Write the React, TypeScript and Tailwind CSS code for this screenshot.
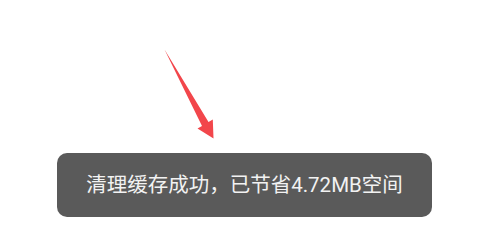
import React from "react";

export default function App() {
  return (
    <div className="relative w-[480px] h-[233px] bg-white overflow-hidden">
      <svg
        className="absolute left-0 top-0"
        width="480"
        height="233"
        viewBox="0 0 480 233"
      >
        <polygon
          points="164.5,49.5 202,126 197.5,128.5 213.5,138.5 212.8,119.5 208.5,122"
          fill="#f2464b"
        />
      </svg>
      <div className="pt-[153px] pl-[57px] flex">
        <div className="w-[375px] h-[64px] rounded-[10px] bg-[#5a5a5a] flex items-center justify-center">
          <span className="text-[20.5px] text-[#f2f2f2] leading-none font-['Roboto','Noto_Sans_CJK_SC',sans-serif]">
            清理缓存成功，已节省4.72MB空间
          </span>
        </div>
      </div>
    </div>
  );
}
